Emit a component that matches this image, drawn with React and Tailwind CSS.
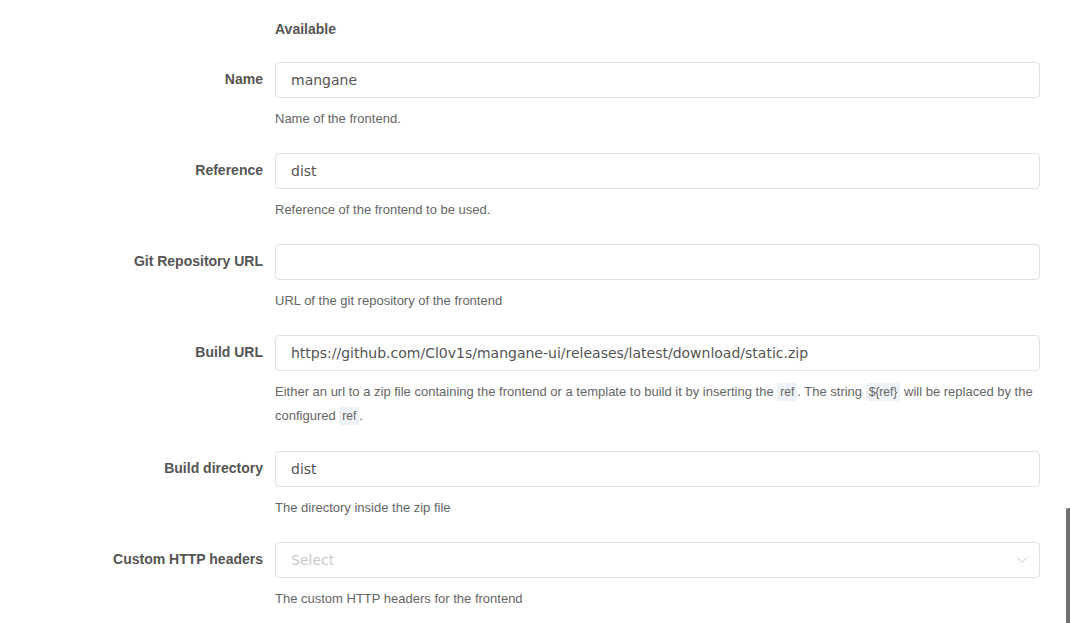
import React from "react";

const Code = ({ children }) => (
  <code className="rounded-[2px] bg-[#eef1f5] px-[3px] py-[2px] font-['Liberation_Sans',sans-serif] text-[12px] text-[#666]">
    {children}
  </code>
);

const Field = ({ label, children, help }) => (
  <div className="flex">
    <div className="w-[263px] shrink-0 pt-[8px] text-right text-[14px] font-bold leading-[18px] text-[#555]">
      {label}
    </div>
    <div className="ml-[12px] min-w-0 flex-1">
      {children}
      <div className="mt-[9px] mb-[23px] text-[13px] leading-[23px] text-[#666]">{help}</div>
    </div>
  </div>
);

const TextInput = ({ value, placeholder }) => (
  <input
    readOnly
    value={value}
    placeholder={placeholder}
    className="block h-[36px] w-full rounded-[4px] border border-[#e0e0e6] bg-white px-[15px] font-['DejaVu_Sans',sans-serif] text-[14px] text-[#555] outline-none placeholder:text-[#c8c8cc]"
  />
);

const SelectInput = () => (
  <div className="flex h-[36px] w-full items-center justify-between rounded-[4px] border border-[#e0e0e6] bg-white pl-[15px] pr-[11px]">
    <span className="font-['DejaVu_Sans',sans-serif] text-[14px] text-[#c8c8cc]">Select</span>
    <svg width="12" height="8" viewBox="0 0 12 8" fill="none" stroke="#c4c4c8" strokeWidth="1">
      <path d="M1 1.5l5 5 5-5" />
    </svg>
  </div>
);

export default function App() {
  return (
    <div className="relative h-[623px] w-[1070px] overflow-hidden bg-white font-['Liberation_Sans',Arial,sans-serif]">
      <div className="pr-[30px]">
        <div className="ml-[275px] pt-[20px] pb-[24px] text-[14px] font-bold leading-[18px] text-[#555]">
          Available
        </div>

        <Field label="Name" help="Name of the frontend.">
          <TextInput value="mangane" />
        </Field>

        <Field label="Reference" help="Reference of the frontend to be used.">
          <TextInput value="dist" />
        </Field>

        <Field label="Git Repository URL" help="URL of the git repository of the frontend">
          <TextInput value="" />
        </Field>

        <Field
          label="Build URL"
          help={
            <>
              Either an url to a zip file containing the frontend or a template to build it by inserting the{" "}
              <Code>ref</Code>. The string <Code>{"${ref}"}</Code> will be replaced by the configured <Code>ref</Code>.
            </>
          }
        >
          <TextInput value="https://github.com/Cl0v1s/mangane-ui/releases/latest/download/static.zip" />
        </Field>

        <Field label="Build directory" help="The directory inside the zip file">
          <TextInput value="dist" />
        </Field>

        <Field label="Custom HTTP headers" help="The custom HTTP headers for the frontend">
          <SelectInput />
        </Field>
      </div>

      {/* scrollbar thumb */}
      <div className="absolute right-0 top-[508px] h-[120px] w-[4px] rounded-l-[2px] bg-[#6f6f6f]" />
    </div>
  );
}
